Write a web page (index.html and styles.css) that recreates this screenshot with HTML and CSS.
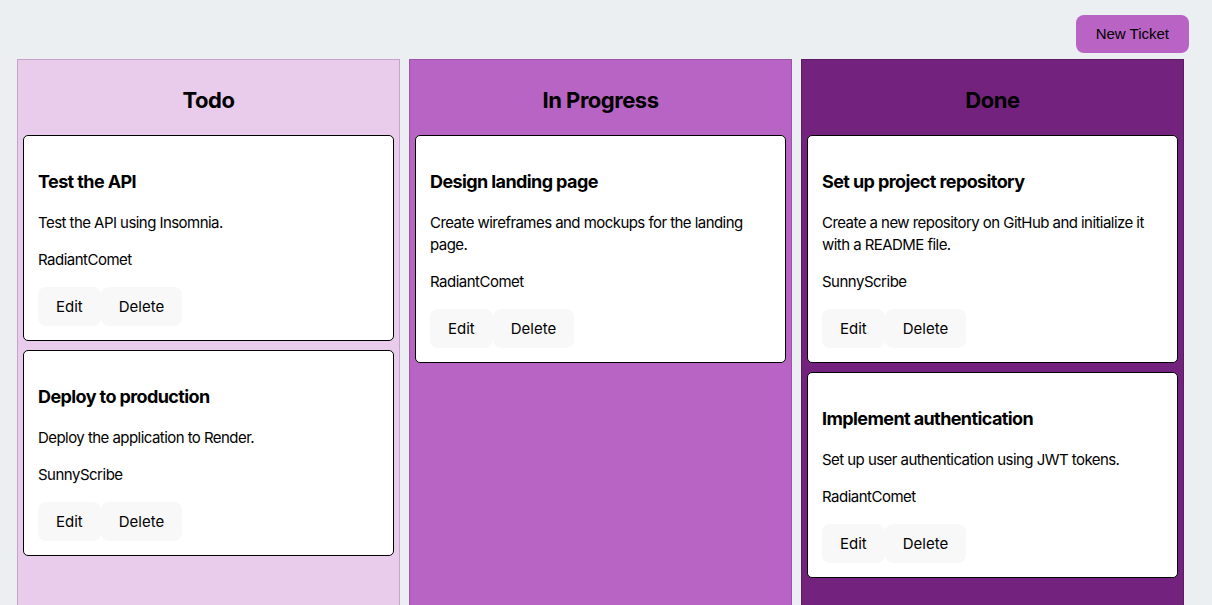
FILE: index.html
```html
<!DOCTYPE html>
<html lang="en">
<head>
<meta charset="utf-8">
<title>Kanban Board</title>
<link rel="stylesheet" href="styles.css">
</head>
<body>
<div class="page">
  <div class="toolbar">
    <button class="new-ticket">New Ticket</button>
  </div>
  <div class="board">
    <section class="column todo">
      <h2 class="column-title">Todo</h2>
      <article class="card">
        <h3 class="card-title">Test the API</h3>
        <p class="card-desc">Test the API using Insomnia.</p>
        <p class="card-author">RadiantComet</p>
        <div class="card-actions"><button class="btn">Edit</button><button class="btn">Delete</button></div>
      </article>
      <article class="card">
        <h3 class="card-title">Deploy to production</h3>
        <p class="card-desc">Deploy the application to Render.</p>
        <p class="card-author">SunnyScribe</p>
        <div class="card-actions"><button class="btn">Edit</button><button class="btn">Delete</button></div>
      </article>
    </section>
    <section class="column progress">
      <h2 class="column-title">In Progress</h2>
      <article class="card">
        <h3 class="card-title">Design landing page</h3>
        <p class="card-desc">Create wireframes and mockups for the landing page.</p>
        <p class="card-author">RadiantComet</p>
        <div class="card-actions"><button class="btn">Edit</button><button class="btn">Delete</button></div>
      </article>
    </section>
    <section class="column done">
      <h2 class="column-title">Done</h2>
      <article class="card">
        <h3 class="card-title">Set up project repository</h3>
        <p class="card-desc">Create a new repository on GitHub and initialize it with a README file.</p>
        <p class="card-author">SunnyScribe</p>
        <div class="card-actions"><button class="btn">Edit</button><button class="btn">Delete</button></div>
      </article>
      <article class="card">
        <h3 class="card-title">Implement authentication</h3>
        <p class="card-desc">Set up user authentication using JWT tokens.</p>
        <p class="card-author">RadiantComet</p>
        <div class="card-actions"><button class="btn">Edit</button><button class="btn">Delete</button></div>
      </article>
    </section>
  </div>
</div>
</body>
</html>
```

FILE: styles.css
```css
* { box-sizing: border-box; }
html, body { margin: 0; padding: 0; }
body {
  background: #eceff1;
  font-family: Inter, "Noto Sans", sans-serif;
  color: #000;
  overflow: hidden;
}
.page {
  padding: 15px 23px 0 17px;
}
.toolbar {
  display: flex;
  justify-content: flex-end;
  margin-bottom: 6px;
}
.new-ticket {
  font-family: "Liberation Sans", Arial, sans-serif;
  font-size: 15px;
  line-height: 18px;
  padding: 10px 20px;
  background: #b964c5;
  color: #000;
  border: none;
  border-radius: 8px;
  height: 38px;
}
.board {
  display: grid;
  grid-template-columns: repeat(3, 383px);
  gap: 9px;
  align-items: start;
}
.column {
  min-height: 600px;
  border: 1px solid;
  padding: 0 5px;
}
.todo { background: #e9cbec; border-color: #c7a3cb; }
.progress { background: #b864c4; border-color: #9c55a6; }
.done { background: #73237e; border-color: #5e1c67; }
.column-title {
  margin: 26px 0 21px;
  font-size: 22px;
  line-height: 28px;
  font-weight: 700;
  text-align: center;
  letter-spacing: -0.47px;
}
.card {
  background: #fff;
  border: 1px solid #000;
  border-radius: 5px;
  padding: 0 14px 14px;
  margin-bottom: 9px;
}
.card-title {
  margin: 35px 0 19px;
  font-size: 18px;
  line-height: 22px;
  font-weight: 700;
  letter-spacing: -0.6px;
}
.card-desc {
  margin: 0 0 15px;
  font-size: 15px;
  line-height: 22px;
  letter-spacing: -0.55px;
}
.card-author {
  margin: 0 0 16px;
  font-size: 15px;
  line-height: 22px;
  letter-spacing: -0.5px;
}
.card-actions {
  display: flex;
}
.btn {
  font-family: Inter, "Noto Sans", sans-serif;
  font-size: 15px;
  line-height: 19px;
  padding: 10px 18px;
  height: 39px;
  border: none;
  border-radius: 8px;
  background: #f8f8f8;
  color: #000;
}
```
